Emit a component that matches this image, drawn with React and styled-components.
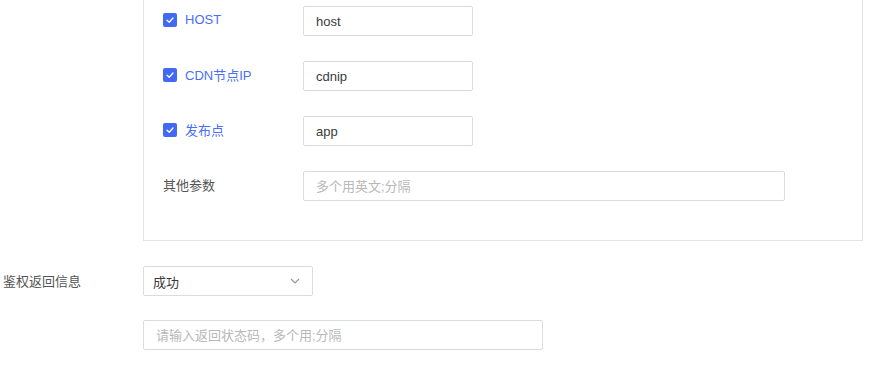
import React from "react";
import styled, { createGlobalStyle } from "styled-components";

const Global = createGlobalStyle`
  html, body { margin: 0; padding: 0; background: #fff; }
  body {
    font-family: "Liberation Sans", Arial, "Noto Sans CJK SC", sans-serif;
    font-size: 13px;
    color: #333;
  }
  input::placeholder { color: #b8b8b8; }
`;

const Page = styled.div`
  width: 883px;
  padding-left: 3px;
  box-sizing: border-box;
`;

const FormRow = styled.div`
  display: flex;
  align-items: ${(p) => (p.$top ? "flex-start" : "center")};
  margin-top: ${(p) => p.$mt || 0}px;
`;

const FormLabel = styled.div`
  width: 140px;
  flex: none;
  color: #555;
  font-size: 13px;
  padding-bottom: 2px;
`;

const Panel = styled.div`
  width: 720px;
  box-sizing: border-box;
  border: 1px solid #e4e4e4;
  border-top: 0;
  padding: 6px 0 39px 19px;
  display: flex;
  flex-direction: column;
  gap: 25px;
`;

const PanelRow = styled.div`
  display: flex;
  align-items: center;
  height: 30px;
`;

const CheckLabel = styled.label`
  width: 140px;
  flex: none;
  display: flex;
  align-items: center;
  gap: 8px;
  padding-bottom: 3px;
  color: ${(p) => (p.$checked ? "#4a6ff5" : "#555")};
  font-size: 13px;
`;

const Box = styled.span`
  width: 14px;
  height: 14px;
  border-radius: 2px;
  background: #4169f4;
  display: inline-flex;
  align-items: center;
  justify-content: center;
  flex: none;
`;

const TextInput = styled.input`
  width: ${(p) => p.$w}px;
  height: 30px;
  box-sizing: border-box;
  border: 1px solid #dcdcdc;
  border-radius: 2px;
  padding: 0 12px;
  font-family: inherit;
  font-size: 13px;
  color: #3a3a3a;
  outline: none;
  background: #fff;
`;

const Select = styled.div`
  width: 170px;
  height: 30px;
  box-sizing: border-box;
  border: 1px solid #dcdcdc;
  border-radius: 2px;
  padding: 0 12px 0 9px;
  display: flex;
  align-items: center;
  justify-content: space-between;
  color: #3a3a3a;
`;

const Indent = styled.div`
  padding-left: 140px;
  margin-top: 24px;
`;

const Check = () => (
  <Box>
    <svg width="10" height="10" viewBox="0 0 10 10">
      <polyline points="2,5.2 4.2,7.2 8,3" fill="none" stroke="#fff" strokeWidth="1.3" strokeLinecap="round" strokeLinejoin="round" />
    </svg>
  </Box>
);

const rows = [
  { label: "HOST", value: "host" },
  { label: "CDN节点IP", value: "cdnip" },
  { label: "发布点", value: "app" },
];

export default function App() {
  return (
    <>
      <Global />
      <Page>
        <FormRow $top>
          <FormLabel />
          <Panel>
            {rows.map((r) => (
              <PanelRow key={r.label}>
                <CheckLabel $checked>
                  <Check />
                  {r.label}
                </CheckLabel>
                <TextInput $w={170} defaultValue={r.value} />
              </PanelRow>
            ))}
            <PanelRow>
              <CheckLabel>其他参数</CheckLabel>
              <TextInput $w={482} placeholder="多个用英文;分隔" />
            </PanelRow>
          </Panel>
        </FormRow>
        <FormRow $mt={25}>
          <FormLabel>鉴权返回信息</FormLabel>
          <Select>
            <span>成功</span>
            <svg width="10" height="6" viewBox="0 0 10 6">
              <polyline points="1,1 5,5 9,1" fill="none" stroke="#999" strokeWidth="1.2" />
            </svg>
          </Select>
        </FormRow>
        <Indent>
          <TextInput $w={400} placeholder="请输入返回状态码，多个用;分隔" />
        </Indent>
      </Page>
    </>
  );
}
